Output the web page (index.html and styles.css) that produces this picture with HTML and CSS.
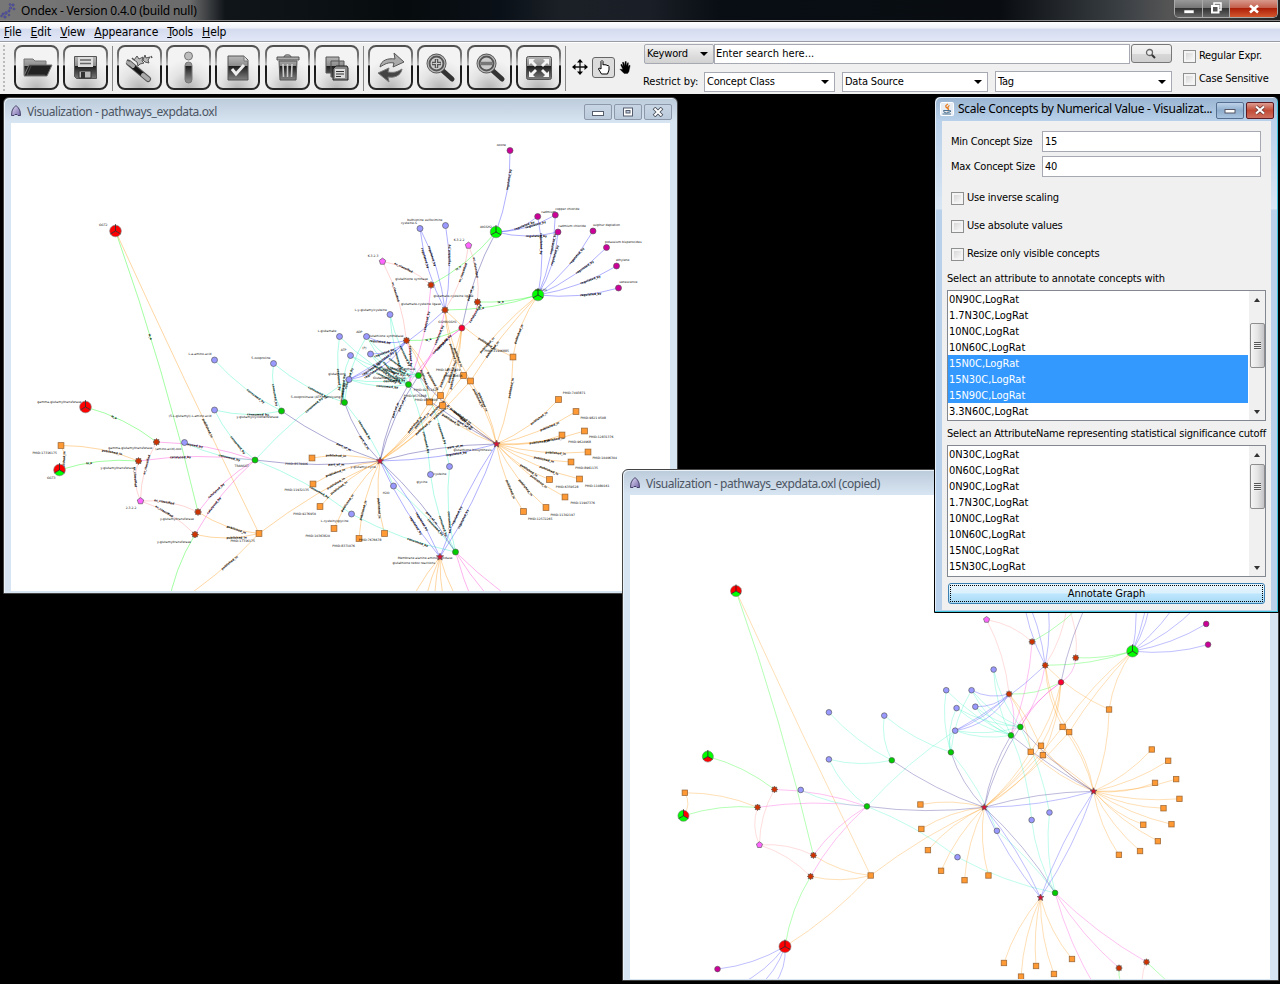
FILE: index.html
```html
<!DOCTYPE html>
<html lang="en">
<head>
<meta charset="utf-8">
<title>Ondex - Version 0.4.0 (build null)</title>
<link rel="stylesheet" href="styles.css">
</head>
<body>
<svg class="defs" width="0" height="0">
  <defs>
    <linearGradient id="frame" x1="0" y1="0" x2="0" y2="44" gradientUnits="userSpaceOnUse">
      <stop offset="0" stop-color="#4c4c4c"/><stop offset=".25" stop-color="#777"/><stop offset=".46" stop-color="#c4c4c4"/><stop offset=".47" stop-color="#161616"/><stop offset="1" stop-color="#2a2a2a"/>
    </linearGradient>
    <radialGradient id="glow" cx=".5" cy="1" r=".7"><stop offset="0" stop-color="#b4b4b4"/><stop offset=".6" stop-color="#e4e4e4"/><stop offset="1" stop-color="#f3f3f3"/></radialGradient>
    <linearGradient id="ink" x1="0" y1="9" x2="0" y2="36" gradientUnits="userSpaceOnUse">
      <stop offset="0" stop-color="#c2c2c2"/><stop offset=".43" stop-color="#8d8d8d"/><stop offset=".45" stop-color="#1c1c1c"/><stop offset="1" stop-color="#8a8a8a"/>
    </linearGradient>
    <linearGradient id="house" x1="0" y1="0" x2="1" y2="1"><stop offset="0" stop-color="#e4e0f6"/><stop offset="1" stop-color="#7466a8"/></linearGradient>
    <symbol id="app-icon" viewBox="0 0 12 14"><path d="M6 1.500 3.500 4 2 7l-.5 4.500H4l1-1h2l1 1h2.500L10 7 8.500 4z" fill="url(#house)" stroke="#3a3660" stroke-width=".9"/></symbol>
    <symbol id="box" viewBox="0 0 45 45"><rect x="1" y="1" width="43" height="43" rx="7" fill="url(#glow)" stroke="url(#frame)" stroke-width="2"/></symbol>
  </defs>
</svg>
<div class="app">
  <header class="titlebar">
    <svg class="logo" width="18" height="20" viewBox="0 0 18 20"><g fill="#5555a2" stroke="#3f3f80" stroke-width=".4"><circle cx="13" cy="5" r="1.300"/><circle cx="10.500" cy="8" r="1.300"/><circle cx="14" cy="9" r="1.100"/><circle cx="9" cy="11" r="1.200"/><circle cx="6" cy="13" r="1.400"/><circle cx="3" cy="14" r="1.200"/><circle cx="5" cy="17" r="1.300"/><circle cx="9" cy="15" r="1"/><circle cx="10" cy="4.500" r="1"/><circle cx="1.500" cy="16" r="1"/></g></svg>
    <span class="app-title">Ondex - Version 0.4.0 (build null)</span>
    <div class="sysbuttons">
      <span class="sys"><svg width="12" height="14"><rect x="1" y="8" width="10" height="3.500" fill="#fff" stroke="#444" stroke-width=".6"/></svg></span>
      <span class="sys"><svg width="12" height="14"><path d="M4 3V1h7v7H9" fill="none" stroke="#fff" stroke-width="1.500"/><rect x="2" y="4" width="6.500" height="6.500" fill="#555" stroke="#fff" stroke-width="2"/></svg></span>
      <span class="sys sys-close"><svg width="12" height="14"><path d="m2 3.500 8 7m0-7-8 7" stroke="#fff" stroke-width="2.600"/></svg></span>
    </div>
  </header>
  <nav class="menubar"><span><u>F</u>ile</span><span><u>E</u>dit</span><span><u>V</u>iew</span><span><u>A</u>ppearance</span><span><u>T</u>ools</span><span><u>H</u>elp</span></nav>
  <div class="toolbar">
    <div class="grip"></div>
    <div class="group">
      <svg class="tool" viewBox="0 0 45 45"><use href="#box"/><path d="M10 30V14h9l2 2h11v5" fill="url(#ink)" stroke="#777"/><path d="m10 31 5-11h23l-5 11z" fill="#222" stroke="#777"/><path d="m17 21-4 9h18" fill="none" stroke="#777" opacity=".5"/></svg>
      <svg class="tool" viewBox="0 0 45 45"><use href="#box"/><path d="M11.500 11.500h22v22h-20l-2-2z" fill="url(#ink)" stroke="#555"/><path d="M15 12h15v10H15z" fill="#ddd"/><path d="M17 15h11M17 18.500h11" stroke="#666" stroke-width="1.300"/><path d="M16 26h12v7H16z" fill="#bbb" stroke="#333"/><path d="M18 27h4v6h-4z" fill="#333"/></svg>
    </div>
    <div class="rule"></div>
    <div class="group">
      <svg class="tool" viewBox="0 0 45 45"><use href="#box"/><path d="m12 18 19 16" stroke="#555" stroke-width="6" stroke-linecap="round"/><path d="m13 19 12 10" stroke="#161616" stroke-width="4"/><path d="m11 17 5 4m10 9 5 4" stroke="#aaa" stroke-width="4" stroke-linecap="round"/><path d="m20 11 2 3 4-2-1 4 2 2-4 1-2 2-1-4-3-2zM28 10l1 3 4-1-2 3 1 3-4-1-2-2z" fill="#bbb" stroke="#555"/><path d="m15 13 2 2m-7 0 3 1m21-5 1 2" stroke="#555" stroke-width="1.500"/></svg>
      <svg class="tool" viewBox="0 0 45 45"><use href="#box"/><circle cx="22.500" cy="11" r="4" fill="#bdbdbd" stroke="#777"/><rect x="19" y="17" width="7" height="21" rx="3.500" fill="url(#ink)" stroke="#777"/></svg>
      <svg class="tool" viewBox="0 0 45 45"><use href="#box"/><path d="M13 11h16l4 4v20H13z" fill="url(#ink)" stroke="#555"/><path d="M29 11v5h4" fill="#ddd" stroke="#777"/><path d="m17 24 4 5 8-9" fill="none" stroke="#eee" stroke-width="3"/></svg>
      <svg class="tool" viewBox="0 0 45 45"><use href="#box"/><path d="M14 16h18l-1 19H15z" fill="url(#ink)" stroke="#555"/><path d="M12 15h22v-3H12zM19 12c0-3 7-3 7 0" fill="#aaa" stroke="#555"/><path d="m18 19 .5 13m4-13v13m4.500-13-.5 13" stroke="#ccc" stroke-width="1.600"/></svg>
      <svg class="tool" viewBox="0 0 45 45"><use href="#box"/><path d="M12 12h13v16H12zM17 16h13v16H17z" fill="url(#ink)" stroke="#555"/><path d="M22 21h11l1 2v12H19V24z" fill="#888" stroke="#222"/><path d="M21 24h10v9H21z" fill="#ddd"/><path d="M22 26.500h8m-8 2.500h8m-8 2.500h5" stroke="#333"/></svg>
    </div>
    <div class="rule"></div>
    <div class="group">
      <svg class="tool" viewBox="0 0 45 45"><use href="#box"/><path d="M12 22c1-7 8-9 15-8l-1-6 10 9-11 5 1-4c-6-1-9 1-14 4z" fill="#aaa" stroke="#555"/><path d="M34 24c-1 7-8 9-14 8l1 5-11-9 11-5-1 4c6 1 9 0 14-3z" fill="#444" stroke="#777"/></svg>
      <svg class="tool" viewBox="0 0 45 45"><use href="#box"/><path d="m25 25 10 9" stroke="#333" stroke-width="5" stroke-linecap="round"/><circle cx="19.500" cy="18.500" r="8" fill="#ccc" stroke="#555" stroke-width="4"/><circle cx="19.500" cy="18.500" r="8.500" fill="none" stroke="#bbb" stroke-width="1.200"/><path d="M19.500 14v9M15 18.500h9" stroke="#555" stroke-width="3.500"/><path d="M19.500 14.500v8m-4-4h8" stroke="#ccc"/></svg>
      <svg class="tool" viewBox="0 0 45 45"><use href="#box"/><path d="m25 25 10 9" stroke="#333" stroke-width="5" stroke-linecap="round"/><circle cx="19.500" cy="18.500" r="8" fill="#ccc" stroke="#555" stroke-width="4"/><circle cx="19.500" cy="18.500" r="8.500" fill="none" stroke="#bbb" stroke-width="1.200"/><path d="M14 18.500h11" stroke="#777" stroke-width="3.500"/></svg>
      <svg class="tool" viewBox="0 0 45 45"><use href="#box"/><rect x="10.500" y="11.500" width="25" height="23" rx="2" fill="url(#ink)" stroke="#555"/><g fill="#f4f4f4"><path d="M13 14h6l-2 2 4 4-2 2-4-4-2 2zM33 14h-6l2 2-4 4 2 2 4-4 2 2zM13 32h6l-2-2 4-4-2-2-4 4-2-2zM33 32h-6l2-2-4-4 2-2 4 4 2-2z"/></g></svg>
    </div>
    <div class="rule"></div>
    <div class="modes">
      <svg width="16" height="16" viewBox="0 0 16 16"><path d="M8 2v12M2 8h12" stroke="#111" stroke-width="1.300"/><path d="m8 0 3 3.500H5zM8 16l3-3.500H5zM0 8l3.500-3v6zM16 8l-3.500-3v6z"/></svg>
      <span class="mode-on"><svg width="14" height="16" viewBox="0 0 14 16"><path d="M4 10V2.500q1-2 2 0V6q1-1 2 0 1-1 2 .5 1.800-.5 2 1V11l-1.500 4h-6L1.500 10q0-2 2.500 0z" fill="#fff" stroke="#000"/></svg></span>
      <svg width="12" height="15" viewBox="0 0 14 16"><path d="M4.500 10 2 5l1-1 2 3-1-5h1.500L7 6V1h1.500v5L10 2.500h1L10.500 7 12 5l1 1-1.500 7-1.500 2H6L1 10z" stroke="#000" stroke-width=".4"/></svg>
    </div>
    <div class="search">
      <div class="row1">
        <span class="combo keyword">Keyword<i></i></span><span class="field query">Enter search here...</span>
        <span class="findbtn"><svg width="12" height="12" viewBox="0 0 12 12"><path d="m6 6 4 4" stroke="#333" stroke-width="2"/><circle cx="4.500" cy="4.500" r="3" fill="#eee" stroke="#666" stroke-width="1.300"/></svg></span>
      </div>
      <div class="row2">
        <span class="restrict">Restrict by:</span><span class="combo w131">Concept Class<i></i></span><span class="combo w146">Data Source<i></i></span><span class="combo w177">Tag<i></i></span>
      </div>
    </div>
    <div class="flags"><span><b class="check"></b>Regular Expr.</span><span><b class="check"></b>Case Sensitive</span></div>
  </div>
  <main class="desktop">
    <section class="win win-one">
      <div class="cap"><svg width="12" height="14"><use href="#app-icon"/></svg><span class="cap-text">Visualization - pathways_expdata.oxl</span>
        <span class="capbtn"><svg width="12" height="10"><rect x=".5" y="4.500" width="11" height="4" fill="#fff" stroke="#555d6c"/></svg></span>
        <span class="capbtn"><svg width="12" height="10"><rect x="1.500" y="1" width="9" height="8" fill="#fff" stroke="#555d6c"/><rect x="4" y="3.500" width="4" height="2.500" fill="#bccbdc" stroke="#555d6c"/></svg></span>
        <span class="capbtn"><svg width="12" height="10"><path d="m2 1 8 8m0-8-8 8" stroke="#49515e" stroke-width="3.800"/><path d="m2.500 1.500 7 7m0-7-7 7" stroke="#fff" stroke-width="2"/></svg></span>
      </div>
      <svg class="graph" id="graph-one" viewBox="11 123 659 468" width="659" height="468"></svg>
    </section>
    <section class="win win-two">
      <div class="cap"><svg width="12" height="14"><use href="#app-icon"/></svg><span class="cap-text">Visualization - pathways_expdata.oxl (copied)</span></div>
      <svg class="graph" id="graph-two" viewBox="630 495 640 484" width="640" height="484"></svg>
    </section>
    <section class="dialog">
      <div class="dcap">
        <svg width="14" height="14" viewBox="0 0 14 14"><rect x=".5" y=".5" width="13" height="13" rx="1" fill="#e8edf3" stroke="#fff"/><path d="M8 2q-4 2-1 4t0 3M9.500 3.500Q7 5 8.500 7" fill="none" stroke="#e8791c" stroke-width="1.300"/><path d="M3.500 8.500h6q0 2.500-3 2.500t-3-2.500M9.500 8.500q3 0 0 2M2.500 12h8.500" fill="none" stroke="#4c7190"/></svg>
        <span class="dcap-text">Scale Concepts by Numerical Value - Visualizat...</span>
        <span class="dbtn"><svg width="12" height="10"><rect x="1" y="4.500" width="10" height="3.500" fill="#fff" stroke="#556"/></svg></span>
        <span class="dbtn dclose"><svg width="12" height="10"><path d="m2 1.500 8 7m0-7-8 7" stroke="#633" stroke-width="3.600"/><path d="m2 1.500 8 7m0-7-8 7" stroke="#fff" stroke-width="2.200"/></svg></span>
      </div>
      <div class="dbody">
        <div class="pair"><label class="min">Min Concept Size</label><span class="field">15</span></div>
        <div class="pair"><label>Max Concept Size</label><span class="field">40</span></div>
        <div class="options"><span><b class="check"></b>Use inverse scaling</span><span><b class="check"></b>Use absolute values</span><span><b class="check"></b>Resize only visible concepts</span></div>
        <div class="caption c1">Select an attribute to annotate concepts with</div>
        <div class="list l1">
          <ul><li>0N90C,LogRat</li><li>1.7N30C,LogRat</li><li>10N0C,LogRat</li><li>10N60C,LogRat</li><li class="on">15N0C,LogRat</li><li class="on">15N30C,LogRat</li><li class="on">15N90C,LogRat</li><li>3.3N60C,LogRat</li></ul>
          <div class="bar"><i class="up"></i><div class="track t1"><div class="thumb"><s></s></div></div><i class="down"></i></div>
        </div>
        <div class="caption c2">Select an AttributeName representing statistical significance cutoff</div>
        <div class="list l2">
          <ul><li>0N30C,LogRat</li><li>0N60C,LogRat</li><li>0N90C,LogRat</li><li>1.7N30C,LogRat</li><li>10N0C,LogRat</li><li>10N60C,LogRat</li><li>15N0C,LogRat</li><li>15N30C,LogRat</li></ul>
          <div class="bar"><i class="up"></i><div class="track t2"><div class="thumb"><s></s></div></div><i class="down"></i></div>
        </div>
        <div class="annotate"><span>Annotate Graph</span></div>
      </div>
    </section>
  </main>
</div>
<script src="graph.js"></script>
</body>
</html>
```
FILE: styles.css
```css
* { box-sizing: border-box; }
body { margin: 0; background: #000; color: #000; font: 11px/14px "DejaVu Sans Condensed", "Noto Sans", sans-serif; }
.defs { position: absolute; }
.app { width: 1280px; height: 984px; display: flex; flex-direction: column; overflow: hidden; }
.titlebar { height: 22px; flex: none; display: flex; background: linear-gradient(90deg, #777 0, #6b6b6b 190px, #10151a 225px, #0c1115 320px, #060b0d 400px, #0a1017 500px, #1b2027 560px, #1a1e26 650px, #080e14 720px, #090d12 1000px, #3a3f44 1120px, #555 1170px, #222 1280px); border-bottom: 1px solid #111; box-shadow: inset 0 -1px #888; }
.logo { margin-right: 3px; }
.app-title { font: 12px/21px "Noto Sans", sans-serif; letter-spacing: -.2px; flex: 1; color: #000; }
.sysbuttons { display: flex; height: 18px; margin-right: 2px; border: 1px solid #aaa; border-top: 0; border-radius: 0 0 5px 5px; overflow: hidden; }
.sys { width: 28px; display: flex; align-items: center; justify-content: center; border-right: 1px solid #aaa; background: linear-gradient(#999 0, #777 45%, #333 50%, #666); }
.sys:nth-child(2) { width: 27px; }
.sys-close { width: 47px; border: 0; background: linear-gradient(#d8998c 0, #c4604d 45%, #ac2009 50%, #d4572d); }
.menubar { height: 20px; flex: none; display: flex; gap: 9px; padding-left: 4px; font-size: 12px; line-height: 20px; letter-spacing: -.1px; background: linear-gradient(#fff 0, #eef1f8 33%, #d4dbee 36%, #e0e6f6 92%); border-bottom: 1px solid #9a9ca5; }
.toolbar { height: 52px; flex: none; display: flex; background: #f0f0f0; border-top: 1px solid #fff; padding-bottom: 1px; }
.grip { width: 3px; margin: 2px 8.500px 2px 3px; border-left: 2px dotted #bbb; }
.group { display: flex; gap: 4.100px; padding: 2px 0 0 0; margin-left: -1px; }
.tool { width: 45px; height: 45px; }
.rule { width: 1px; height: 45px; margin: 3px 5px 0 4.700px; background: #888; }
.modes { display: flex; align-items: center; padding-bottom: 2px; gap: 4px; width: 67px; margin-left: 1px; }
.mode-on { width: 23px; height: 21px; border: 1px solid #666; border-radius: 3px; background: #dcdcdc; display: flex; align-items: center; justify-content: center; }
.search { width: 530px; margin-left: 3.600px; }
.row1, .row2 { display: flex; align-items: center; height: 21px; }
.row1 { margin: 0 0 7px 1px; }
.combo, .field { display: flex; align-items: center; height: 20px; background: #fff; border: 1px solid #a6a9b2; padding: 0 2px; white-space: nowrap; letter-spacing: -.18px; }
.combo i { margin-left: auto; margin-right: 3px; border: 4px solid transparent; border-bottom: 0; border-top-color: #000; }
.keyword { width: 70px; background: linear-gradient(#f2f2f2, #ddd 60%, #d2d2d2); border-radius: 2px; }
.query { width: 416px; padding-left: 1px; letter-spacing: .05px; }
.findbtn { width: 41px; height: 19px; margin-left: 1px; border: 1px solid #777; border-radius: 3px; background: linear-gradient(#f4f4f4, #ebebeb 50%, #d8d8d8 52%, #cfcfcf); display: flex; align-items: center; justify-content: center; }
.restrict { width: 61px; letter-spacing: 0; white-space: nowrap; }
.w131 { width: 131px; margin-right: 7px; }
.w146 { width: 146px; margin-right: 7px; }
.w177 { width: 177px; height: 21px; }
.flags { display: flex; flex-direction: column; gap: 9px; padding: 6px 0 0 10px; white-space: nowrap; letter-spacing: -.2px; }
.flags span, .options span { display: flex; align-items: center; height: 14px; }
.check { width: 13px; height: 13px; flex: none; margin-right: 3px; border: 1px solid #8e8f8f; background: linear-gradient(135deg, #cfcfcf, #fff); box-shadow: inset 0 0 0 2px #f4f4f4; }
.desktop { flex: 1; position: relative; background: #000; }
.win { position: absolute; border: 1px solid #444; border-radius: 6px 6px 0 0; background: linear-gradient(#bccbda 0, #d7e4f2 24px); padding: 0 7px; box-shadow: inset 1px 1px #e9f1f9; overflow: hidden; }
.win-one { left: 3px; top: 3px; width: 675px; height: 497px; }
.win-two { left: 622px; top: 375px; width: 657px; height: 512px; }
.cap { height: 25px; display: flex; align-items: center; color: #4b5563; font: 12px/25px "Noto Sans", sans-serif; padding-top: 1px; margin-right: -2px; }
.win-two .cap svg, .win-one .cap > svg { margin-left: -1px; }
.cap-text { margin-left: 5px; flex: 1; letter-spacing: -.43px; }
.capbtn { width: 28px; height: 16px; margin: 2px 0 0 2px; border: 1px solid #8d99aa; border-radius: 2px; background: linear-gradient(#c7d5e4, #bccbdc); display: flex; align-items: center; justify-content: center; }
.graph { display: block; background: #fff; font-family: "DejaVu Sans", sans-serif; }
.dialog { position: absolute; left: 934px; top: 2px; width: 345px; height: 517px; border: 1px solid #000; border-radius: 6px 6px 0 0; background: linear-gradient(#99b4d1 0, #b9d1ea 24px, #d9e6f4 112px, #b9d1ea 113px); box-shadow: inset -1px -1px #3fc4dc, inset 1px 1px #e4eef8; padding: 0 7px; }
.dcap { height: 24px; display: flex; align-items: center; font: 12px/24px "Noto Sans", sans-serif; margin-left: -2px; margin-right: -3px; }
.dcap-text { margin-left: 4px; flex: 1; white-space: nowrap; letter-spacing: -.3px; }
.dbtn { width: 28px; height: 17px; margin-top: 2px; border: 1px solid #566f91; border-radius: 2px; background: linear-gradient(#bdd2e8, #8fadcd 50%, #a9c4df); display: flex; align-items: center; justify-content: center; }
.dclose { margin-left: 2px; background: linear-gradient(#dd9d91, #c14b36 50%, #cf7060); border-color: #5c1a22; }
.dbody { height: 489px; background: #f0f0f0; padding: 10px 5px 0; }
.pair { display: flex; height: 25px; padding-left: 4px; letter-spacing: -.24px; }
.pair label { width: 91px; line-height: 21px; }
.pair .field { width: 219px; height: 21px; }
.options { padding: 10px 0 0 4px; display: flex; flex-direction: column; gap: 14px; letter-spacing: -.21px; }
.caption { white-space: nowrap; height: 14px; line-height: 16px; }
.c1 { margin: 10px 0 5px; letter-spacing: -.16px; }
.c2 { margin: 5px 0; letter-spacing: -.2px; }
.list { display: flex; width: 319px; height: 131px; border: 1px solid #828790; background: #fff; }
.l2 { height: 132px; }
.list ul { flex: 1; list-style: none; margin: 0; padding: 0; }
.list li { height: 16px; line-height: 18px; padding-left: 1px; letter-spacing: -.05px; }
.list .on { background: #3399ff; color: #fff; }
.bar { width: 16px; background: #f0f0f0; margin-left: 1px; display: flex; flex-direction: column; align-items: center; padding: 7px 0 6px; }
.bar i { border: 3px solid transparent; }
.up { border-top: 0 !important; border-bottom: 4px solid #333 !important; }
.down { border-bottom: 0 !important; border-top: 4px solid #333 !important; }
.track { flex: 1; padding-top: 21px; }
.t2 { padding-top: 7px; }
.thumb { width: 15px; height: 45px; border: 1px solid #8e8e8e; border-radius: 2px; background: linear-gradient(90deg, #f5f5f5, #e4e4e4 50%, #c4c4c8); display: flex; align-items: center; justify-content: center; }
.thumb s { width: 7px; height: 8px; background: repeating-linear-gradient(#555 0 1px, #eee 1px 2px); }
.annotate { width: 317px; height: 21px; margin: 6px 0 0 1px; padding: 1px; border: 1px solid #3c7fb1; border-radius: 3px; background: linear-gradient(#eaf6fd 0, #d9f0fc 48%, #bee6fd 52%, #a7d9f5); text-align: center; line-height: 15px; letter-spacing: -.1px; }
.annotate span { display: block; border: 1px dotted #000; height: 17px; }
```
FILE: graph.js
```js
const SVG = 'http://www.w3.org/2000/svg';
// id: [kind, x, y, label, label dx, label dy]
const nodes = {
  P1:['pie',115.5,231,'GGT2',-8,-5],P2:['pie',85.5,407,'gamma-glutamyltransferase',-4,-4],P3:['pie',59.5,470,'GGT3',-4,9],P4:['pie',496,232,'AtGSH2',-4,-4],P5:['pie',538,295,'AtGSH1',7,-4],P6:['pie',167.7,609],
  r1:['gear',156.5,442,'gamma-glutamyltransferase',-4,7],r2:['gear',138.5,461,'y-glutamyltransferase',-4,8],r3:['gear',198,512,'y-glutamyltransferase',-4,8],r4:['gear',195,534.5,'y-glutamyltransferase',-4,8],
  r5:['gear',431,285,'glutathione synthase',-3,-5],r6:['gear',445,310,'glutamate-cysteine ligase',-4,-5],r7:['gear',477.5,302,'glutamate-cysteine ligase',-4,-5],r8:['gear',406.5,340.5,'glutathione synthetase',-3,-4],r9:['gear',523.6,631.9],r10:['gear',552.9,625.5],
  k1:['penta',140.5,501,'2.3.2.2',-4,8],k2:['penta',468.5,245.5,'6.3.2.2',-4,-5],k3:['penta',382.5,261.5,'6.3.2.3',-4,-5],
  o1:['box',61,445.5,'PMID:17316175',-4,8],o2:['box',259,533.5,'PMID:17316175',-4,8],o3:['box',312,458,'PMID:8579906',-4,7],o4:['box',313,484,'PMID:11932135',-4,7],o5:['box',320,506.5,'PMID:9276950',-4,8],o6:['box',334,528.5,'PMID:10363820',-4,8],o7:['box',359,538.5,'PMID:8371076',-4,8],o8:['box',384.5,533.5,'PMID:7676678',-3,7],
  o9:['box',558.5,399.5,'PMID:7493871',25,-6],o10:['box',576,411.5,'PMID:9821 0508',28,7],o11:['box',584.5,431,'PMID:12831376',27,7],o12:['box',562,435,'PMID:9624968',27,8],o13:['box',588,452,'PMID:10406304',27,7],o14:['box',571,462,'PMID:8961135',25,7],o15:['box',579.5,479,'PMID:11080161',28,8],o16:['box',549.5,479.5,'PMID:6359528',27,8],o17:['box',565,497,'PMID:11907376',28,7],o18:['box',546,507.5,'PMID:11302197',27,8],o19:['box',523.5,511.5,'PMID:12572265',27,8],
  o20:['box',513,357,'PMID:11906885',-4,-5],o21:['box',463.5,375.5,'PMID:10517819',-3,-5],o22:['box',470.5,381,'PMID:90656',-8,-4],o23:['box',440.5,395.5,'PMID:9275162',-4,-5],o24:['box',429.5,402,'PMID:9575808',-3,-5],o25:['box',442.5,405.5,'PMID:9575808',-5,-5],
  o26:['box',401,626.5],o27:['box',419.2,641],o28:['box',435.2,629.7],o29:['box',454.3,638.2],o30:['box',473.5,622.3],
  b1:['dot',214.5,360,'L-a-amino-acid',-3,-5],b2:['dot',273.5,363.5,'5-oxoproline',-3,-5],b3:['dot',214.5,410,'(5-L-glutamyl)-L-amino acid',-3,7],b4:['dot',184.5,442.5,'(amino-acid)-oxo',-3,7],b5:['dot',420,228.5,'cysteine-S',-3,-5],b6:['dot',445.5,225.5,'buthionine sulfoximine',-3,-5],b7:['dot',390,314.5,'L-y-glutamylcysteine',-3,-4],b8:['dot',339.5,336.5,'L-glutamate',-3,-5],b9:['dot',366.5,336.5,'ADP',-4,-4],b10:['dot',350.5,355.5,'ATP',-4,-5],b11:['dot',370.5,354,'(P)',-4,-5],b12:['dot',349,379.5,'glutathione',-3,-5],b13:['dot',449.5,466.5,'L-cysteine',-3,8],b14:['dot',430.5,474.5,'glycine',-3,8],b15:['dot',393.5,486,'H2O',-4,8],b16:['dot',351.5,514,'L-cysteinylglycine',-3,8],
  g1:['go',281.5,411,'y-glutamylcyclotransferase',-3,7],g2:['go',255,460,'TRANSGT',-6,7],g3:['go',344.5,402.5,'5-oxoprolinase (ATP-hydrolysing)',-3,-5],g4:['go',418.5,375.5,'Glutathione synthase',-3,-6],g5:['go',408.5,384.5,'Glutamate cys ligase',-3,-6],g6:['go',455.5,552,'Membrane alanine aminopeptidase',-3,7],
  c1:['red',461.8,328,'GSHB/GSH1',-5,-5],
  m1:['mag',510,150.5,'ozone',-4,-5],m2:['mag',537.7,216.5,'cadmium',16,-4],m3:['mag',555.3,215,'copper chloride',22,-5],m4:['mag',558,232,'cadmium chloride',26,-5],m5:['mag',593,231,'sulphur depletion',25,-5],m6:['mag',606.5,247.5,'potassium bisperoxides',33,-5],m7:['mag',616.5,266,'ethylene',11,-5],m8:['mag',618.5,288,'senescence',17,-5],m9:['mag',95.8,633],
  s1:['star',380,461,'y-glutamyl cycle',-4,7],s2:['star',496.5,444,'glutathione biosynthesis',-5,7],s3:['star',440,557,'glutathione redox reactions',-5,7],
  x1:['',118,650],x2:['',136,655],x3:['',156,650],x4:['',500,655],x5:['',535,660],x6:['',552,660],x7:['',590,660]
};
const groups = {
  green:{color:'#00ff00',text:'is_a',t:.38,edges:'P1-r3:-1 P2-r1:-1 P3-r2:-1 P6-r4:-1 r5-P4:1 r6-P5:1 r7-P5:.6 r8-c1:1 r9-x5:1 r10-x7:0'},
  orange:{color:'#ff9100',text:'published_in',t:.65,edges:'P1-o2:.3 o1-P3:-1 o1-r2:-1 r3-o2:1 r4-o2:1 P6-o2:1 o2-s1:-1 s1-o3:1 s1-o4:1 s1-o5:1 s1-o6:1 s1-o7:1 s1-o8:1 s1-o23:.8 s1-o24:.8 s1-o25:1 s1-o21:1 s1-o22:1 s2-o9:1 s2-o10:1 s2-o11:1 s2-o12:1 s2-o13:1 s2-o14:1 s2-o15:1 s2-o16:1 s2-o17:1 s2-o18:1 s2-o19:1 s2-o20:1 s2-o21:1 s2-o22:1 s2-o23:-.8 s2-o24:-1 s2-o25:.6 P5-o20:1 P5-o21:1 P5-o22:.7 r6-o20:1 r6-o21:1 r6-o22:1 c1-o23:-1 c1-o24:-1 c1-o25:-1 r8-o24:-1 r8-o25:-1 s3-o26:1 s3-o27:1 s3-o28:.7 s3-o29:1 s3-o30:1'},
  pink:{color:'#ff2bd1',text:'catalysed_by',t:.36,edges:'r1-g2:-1 r2-g2:-1 r3-g2:-1 r4-g2:-1 r5-g5:-1 r6-g4:-1 r7-c1:-1 c1-g4:1 c1-g5:1 r8-g5:-1 g6-r9:1 g6-r10:1 g6-x4:1'},
  peach:{color:'#ff8a8a',text:'ec_classified',t:.4,edges:'r1-k1:1 r2-k1:1 k1-r3:-1 k1-r4:-1 k2-r6:-1 k2-r7:-1 k3-r5:-1 k3-r8:-1 r10-x6:1'},
  cyan:{color:'#25f3bd',text:'consumed_by',t:.65,edges:'b4-g2:1 b1-g1:1 b2-g1:1 b2-g3:1 b3-g1:1 b3-g2:1 g2-b12:-1 g2-b16:-1 b16-g6:1 b15-g3:1 b15-g6:-.7 b7-g4:1 b7-g5:1 b8-g3:1 b8-g5:1 b9-g3:1 b9-g4:1 b9-g5:1 b10-g3:1 b10-g4:1 b10-g5:1 b11-g4:1 b11-g5:1 b12-g3:1 b12-g5:1 b12-g4:1 g4-b13:-1 b13-g6:1 g5-b14:-1 b14-g6:1'},
  navy:{color:'#1a1284',text:'part_of_m',t:.65,edges:'g1-s1:1 g2-s1:1 g3-s1:1 s1-s2:-1 s1-g6:-1 s1-g4:-1 s1-g5:-1 g4-s2:1 g5-s2:.6 P4-c1:1'},
  blue:{color:'#2424ff',text:'regulated_by',t:.65,edges:'s1-s2:1 s1-s3:1 s1-s3:-1 s2-s3:1 s2-s3:-1 P4-m1:1 P4-m2:1 P4-m3:1 P4-m4:1 P5-m2:1 P5-m3:1 P5-m4:1 P5-m5:1 P5-m6:1 P5-m7:1 P5-m8:1 r6-b5:1 r6-b5:-1 r6-b6:1 r8-b9:-1 r8-b11:-1 r8-b12:-1 r8-b12:-2 r6-b12:-1 P6-m9:-1 P6-x1:-1 P6-x2:-1 P6-x3:-1'}
};
const fills = {gear:'#cc3300',penta:'#ff66ff',box:'#ff9933',dot:'#9999ff',go:'#00cc00',red:'#ff0033',mag:'#cc0099',star:'#d61236'};

function el(parent, tag, attrs, text) {
  const e = document.createElementNS(SVG, tag);
  for (const k in attrs) e.setAttribute(k, attrs[k]);
  if (text) e.textContent = text;
  parent.appendChild(e);
  return e;
}
function poly(x, y, n, outer, inner) {
  const p = [], count = inner ? n * 2 : n;
  for (let i = 0; i < count; i++) {
    const r = inner && i % 2 ? inner : outer, a = -Math.PI / 2 + i * 2 * Math.PI / count;
    p.push((x + r * Math.cos(a)).toFixed(2) + ',' + (y + r * Math.sin(a)).toFixed(2));
  }
  return p.join(' ');
}
// slices run clockwise from the top: right, bottom, left
function pie(svg, x, y, r, colors) {
  const at = d => { const a = d * Math.PI / 180; return (x + r * Math.cos(a)) + ' ' + (y + r * Math.sin(a)); };
  colors.forEach((c, i) => el(svg, 'path', {d:`M${x} ${y}L${at(-90+i*120)}A${r} ${r} 0 0 1 ${at(30+i*120)}Z`, fill:c}));
  el(svg, 'circle', {cx:x, cy:y, r, fill:'none', stroke:'#777', 'stroke-width':.6});
  el(svg, 'path', {d:`M${x} ${y}V${y-r-1}M${x} ${y}L${at(30)}M${x} ${y}L${at(150)}`, stroke:'#222', 'stroke-width':.8});
}
function draw(id, map, k, pies, labels, alpha) {
  const svg = document.getElementById(id), texts = [];
  for (const g of Object.values(groups)) for (const item of g.edges.split(' ')) {
    const [ends, bend] = item.split(/:/), [a, b] = ends.split('-').map(n => map(nodes[n][1], nodes[n][2]));
    const dx = b[0]-a[0], dy = b[1]-a[1], len = Math.hypot(dx, dy), o = 8 * k * Number(bend);
    const c = [(a[0]+b[0])/2 - dy/len*o, (a[1]+b[1])/2 + dx/len*o];
    el(svg, 'path', {d:`M${a}Q${c} ${b}`, fill:'none', stroke:g.color, 'stroke-opacity':alpha, 'stroke-width':1});
    const t = g.t, u = 1 - t, ty = u*u*a[1]+2*u*t*c[1]+t*t*b[1];
    // edge labels appear only where they fit inside the canvas
    if (labels && ty < 575 && !ends.startsWith('g6')) {
      let angle = Math.atan2(dy, dx) * 180 / Math.PI;
      if (angle > 90) angle -= 180;
      if (angle < -90) angle += 180;
      texts.push([u*u*a[0]+2*u*t*c[0]+t*t*b[0], ty, angle, g.text]);
    }
  }
  for (const [x, y, angle, text] of texts)
    el(svg, 'text', {transform:`translate(${x} ${y}) rotate(${angle})`, 'text-anchor':'middle', y:1.2, 'font-size':2.9, 'font-weight':'bold', fill:'#000'}, text);
  for (const key in nodes) {
    const [kind, nx, ny, label, lx, ly] = nodes[key], [x, y] = map(nx, ny);
    const style = {fill:fills[kind], stroke:'#555', 'stroke-opacity':.8, 'stroke-width':.8};
    if (kind === 'pie') pie(svg, x, y, key === 'P6' ? 6 : 5.8 * (labels || key === 'P5' ? 1 : .95), pies[key]);
    else if (kind === 'gear') el(svg, 'polygon', {points:poly(x, y, 8, 3.5*k, 2.4*k), ...style});
    else if (kind === 'penta') el(svg, 'polygon', {points:poly(x, y, 5, 3.4*k), ...style});
    else if (kind === 'star') el(svg, 'polygon', {points:poly(x, y, 5, 3.8*k, 1.7*k), ...style});
    else if (kind === 'box') el(svg, 'rect', {x:x-2.9*k, y:y-2.9*k, width:5.8*k, height:5.8*k, ...style, stroke:'#8a5526'});
    else if (kind) el(svg, 'circle', {cx:x, cy:y, r:3*k, ...style});
    if (labels && label) el(svg, 'text', {x:nx+lx+(lx>0?2:0), y:ny+ly, 'text-anchor':'end', 'font-size':3.1, fill:'#111'}, label);
  }
}
const R = '#ff0000', G = '#00ff00';
draw('graph-one', (x, y) => [x, y], 1, {P1:[R,R,R],P2:[R,R,R],P3:[R,G,R],P4:[G,G,G],P5:[G,G,G],P6:[R,R,R]}, true, .36);
draw('graph-two', (x, y) => [.9385*(x-115.5)+736, .9405*(y-231)+591], .94, {P1:[R,G,R],P2:[G,R,G],P3:[R,G,G],P4:[G,G,G],P5:[G,G,G],P6:[R,R,R]}, false, .29);
```
